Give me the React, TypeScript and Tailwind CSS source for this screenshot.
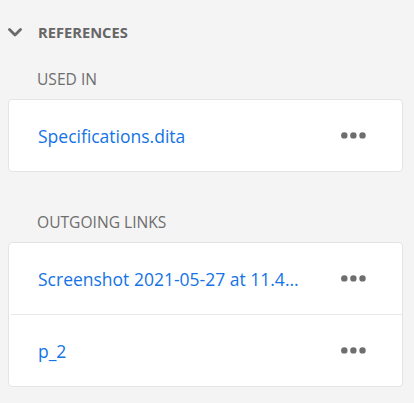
import React, { FC } from "react";

type Ref = { id: string; name: string; title?: string };

const usedIn: Ref[] = [{ id: "u1", name: "Specifications.dita" }];
const outgoing: Ref[] = [
  { id: "o1", name: "Screenshot 2021-05-27 at 11.4…", title: "Screenshot 2021-05-27 at 11.45.12 AM.png" },
  { id: "o2", name: "p_2" },
];

const ChevronDown: FC = () => (
  <svg width="14" height="9" viewBox="0 0 14 9" fill="none" className="shrink-0">
    <path d="M1.5 1.5 L7 7 L12.5 1.5" stroke="#6b6b6b" strokeWidth="2.8" strokeLinecap="round" strokeLinejoin="round" />
  </svg>
);

const MoreIcon: FC = () => (
  <svg width="25" height="7" viewBox="0 0 25 7" className="shrink-0">
    <circle cx="3.3" cy="3.4" r="3.2" fill="#6e6e6e" />
    <circle cx="12.4" cy="3.4" r="3.2" fill="#6e6e6e" />
    <circle cx="21.5" cy="3.4" r="3.2" fill="#6e6e6e" />
  </svg>
);

const RefRow: FC<{ item: Ref }> = ({ item }) => (
  <div className="flex h-[71px] items-center justify-between pl-[29px] pr-[36px]">
    <a
      href="#"
      title={item.title ?? item.name}
      className="block w-[266px] truncate text-[17.5px] leading-6 text-[#1473e6]"
    >
      {item.name}
    </a>
    <button className="flex h-6 items-center" aria-label="More">
      <MoreIcon />
    </button>
  </div>
);

const RefGroup: FC<{ label: string; items: Ref[]; className?: string }> = ({ label, items, className = "" }) => (
  <div className={className}>
    <div className="h-5 pl-[37px] text-[15.6px] leading-5 text-[#6e6e6e]">{label}</div>
    <div className="ml-2 mr-[11px] mt-[10px] rounded-[4px] border border-[#e4e4e4] bg-white">
      {items.map((item, i) => (
        <React.Fragment key={item.id}>
          {i > 0 && <div className="ml-[2px] h-px bg-[#e8e8e8]" />}
          <RefRow item={item} />
        </React.Fragment>
      ))}
    </div>
  </div>
);

const App: FC = () => {
  return (
    <div
      className="h-[403px] w-full overflow-hidden bg-[#f4f4f4]"
      style={{ fontFamily: '"Open Sans", "Noto Sans", sans-serif' }}
    >
      <div className="pt-[22px]">
        <button className="flex h-5 items-center pl-2">
          <ChevronDown />
          <span className="ml-4 text-[14.7px] font-bold leading-5 text-[#666666]">REFERENCES</span>
        </button>
      </div>
      <RefGroup label="USED IN" items={usedIn} className="mt-[27px]" />
      <RefGroup label="OUTGOING LINKS" items={outgoing} className="mt-[40px]" />
    </div>
  );
};

export default App;
